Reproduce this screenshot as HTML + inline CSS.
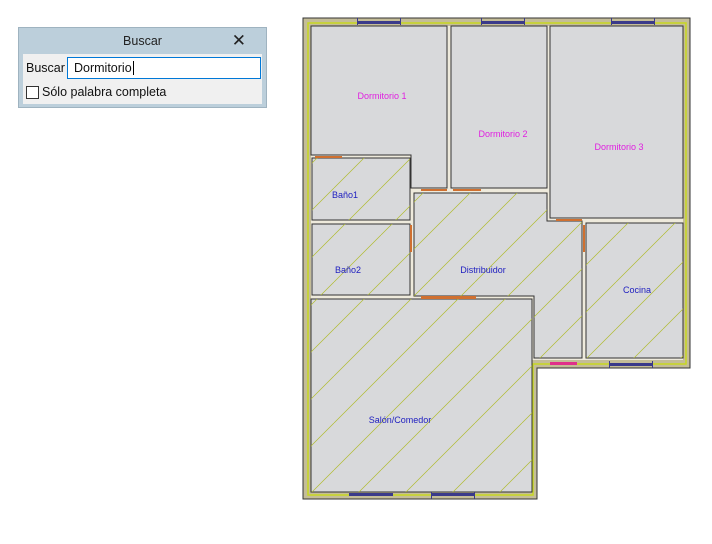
<!DOCTYPE html>
<html><head><meta charset="utf-8"><style>
body{margin:0;width:712px;height:544px;background:#fff;position:relative;overflow:hidden;font-family:"Segoe UI","Liberation Sans",sans-serif}
.dlg{position:absolute;left:18px;top:27px;width:249px;height:81px;background:#bccfdb;border:1px solid #9fb3c0;box-sizing:border-box}
.title{position:absolute;left:0;top:0;width:100%;height:26px;text-align:center;line-height:26px;font-size:12.5px;color:#222}
.x{position:absolute;right:20px;top:3px;font-size:17px;color:#222}
.body{position:absolute;left:4px;top:26px;width:239px;height:50px;background:#f0f0f0}
.lbl{position:absolute;left:3px;top:7px;font-size:12.5px;color:#111}
.inp{position:absolute;left:44px;top:3px;width:194px;height:22px;border:1px solid #0078d7;background:#fff;box-sizing:border-box;font-size:12.5px;line-height:20px;padding-left:6px;color:#111}
.chk{position:absolute;left:3px;top:32px;width:13px;height:13px;border:1px solid #333;background:#fff;box-sizing:border-box}
.cl{position:absolute;left:19px;top:31px;font-size:12.5px;color:#111}
</style></head><body>
<div class="dlg"><div class="title">Buscar</div><div class="x">✕</div>
<div class="body"><div class="lbl">Buscar</div><div class="inp">Dormitorio<span style="border-left:1px solid #000;margin-left:1px"></span></div><div class="chk"></div><div class="cl">Sólo palabra completa</div></div></div>
<svg width="712" height="544" style="position:absolute;left:0;top:0">
<defs><pattern id="h" patternUnits="userSpaceOnUse" width="47" height="47" patternTransform="translate(5,0)">
<line x1="0" y1="47" x2="47" y2="0" stroke="#b0bc30" stroke-width="0.7"/>
<line x1="-47" y1="47" x2="0" y2="0" stroke="#b0bc30" stroke-width="0.7"/>
<line x1="47" y1="47" x2="94" y2="0" stroke="#b0bc30" stroke-width="0.7"/></pattern></defs>
<path d="M303 18H690V368H537V499H303Z" fill="#c4bd98" stroke="#333" stroke-width="1"/>
<path d="M308 23H686V364H533V495H308Z" fill="none" stroke="#c8d820" stroke-width="1.5"/>
<path d="M311 26H683V360H530V492H311Z" fill="#eeeadc"/>
<g fill="#d8d9db" stroke="#333" stroke-width="1">
<path d="M311 26H447V188H411V155H311Z"/>
<rect x="451" y="26" width="96" height="162"/>
<rect x="550" y="26" width="133" height="192"/>
<rect x="312" y="158" width="98" height="62"/>
<rect x="312" y="224" width="98" height="71"/>
<path d="M414 193H547V221H582V358H534V296H414Z"/>
<rect x="586" y="223" width="97" height="135"/>
<rect x="311" y="299" width="221" height="193"/>
</g>
<g fill="url(#h)">
<rect x="312" y="158" width="98" height="62"/>
<rect x="312" y="224" width="98" height="71"/>
<path d="M414 193H547V221H582V358H534V296H414Z"/>
<rect x="586" y="223" width="97" height="135"/>
<rect x="311" y="299" width="221" height="193"/>
</g>
<g fill="#3a3a8a">
<rect x="357" y="21" width="44" height="3"/><rect x="481" y="21" width="44" height="3"/><rect x="611" y="21" width="44" height="3"/>
<rect x="349" y="493" width="44" height="3"/><rect x="431" y="493" width="44" height="3"/><rect x="609" y="363" width="44" height="3"/>
<rect x="357" y="18" width="1" height="7"/><rect x="400" y="18" width="1" height="7"/><rect x="481" y="18" width="1" height="7"/><rect x="524" y="18" width="1" height="7"/><rect x="611" y="18" width="1" height="7"/><rect x="654" y="18" width="1" height="7"/>
<rect x="431" y="492" width="1" height="7"/><rect x="474" y="492" width="1" height="7"/><rect x="609" y="361" width="1" height="7"/><rect x="652" y="361" width="1" height="7"/>
</g>
<g fill="#d07030">
<rect x="315" y="156" width="27" height="2"/><rect x="421" y="189" width="26" height="2"/><rect x="453" y="189" width="28" height="2"/>
<rect x="421" y="296" width="55" height="3"/><rect x="556" y="219" width="26" height="2"/>
<rect x="410" y="225" width="2" height="27"/><rect x="583" y="225" width="2" height="27"/>
</g>
<rect x="550" y="362" width="27" height="3" fill="#e0308a"/>
<g font-family="Liberation Sans,sans-serif" font-size="9" text-anchor="middle">
<text x="382" y="99" fill="#e020e0">Dormitorio 1</text>
<text x="503" y="137" fill="#e020e0">Dormitorio 2</text>
<text x="619" y="150" fill="#e020e0">Dormitorio 3</text>
<text x="345" y="198" fill="#2020c0">Baño1</text>
<text x="348" y="273" fill="#2020c0">Baño2</text>
<text x="483" y="273" fill="#2020c0">Distribuidor</text>
<text x="637" y="293" fill="#2020c0">Cocina</text>
<text x="400" y="423" fill="#2020c0">Salón/Comedor</text>
</g>
</svg>
</body></html>
